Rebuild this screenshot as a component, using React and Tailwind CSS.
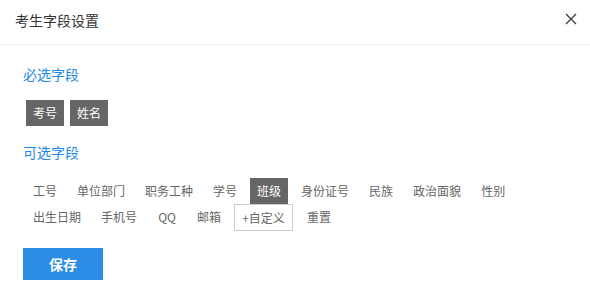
import React from "react";

const optional = ["工号", "单位部门", "职务工种", "学号", "班级", "身份证号", "民族", "政治面貌", "性别", "出生日期", "手机号", "QQ", "邮箱"];

export default function App() {
  return (
    <div
      className="w-[590px] h-[296px] bg-white relative"
      style={{ fontFamily: '"Noto Sans CJK SC", "Noto Sans", sans-serif' }}
    >
      <div className="h-[45px] border-b border-[#eeeeee] flex items-center justify-between pl-[15px] pr-[13px]">
        <span className="text-[14px] text-[#333333] leading-[20px] -mt-[4px]">考生字段设置</span>
        <svg width="12" height="12" viewBox="0 0 12 12" className="-mt-[7px]">
          <path d="M1 1 L11 11 M11 1 L1 11" stroke="#3a3a44" strokeWidth="1.3" fill="none" />
        </svg>
      </div>
      <div className="px-[23px]">
        <div className="mt-[19px] text-[14px] leading-[20px] text-[#1e88e5]">必选字段</div>
        <div className="mt-[16px] pl-[3px] flex gap-[6px]">
          <span className="h-[26px] px-[7px] flex items-center bg-[#666666] text-white text-[12px]">考号</span>
          <span className="h-[26px] px-[7px] flex items-center bg-[#666666] text-white text-[12px]">姓名</span>
        </div>
        <div className="mt-[16px] text-[14px] leading-[20px] text-[#1e88e5]">可选字段</div>
        <div className="mt-[16px] pl-[3px] w-[540px] flex flex-wrap">
          {optional.map((t) => (
            <span
              key={t}
              className={
                t === "班级"
                  ? "h-[26px] px-[7px] mr-[6px] flex items-center bg-[#666666] text-white text-[12px]"
                  : t === "QQ"
                  ? "h-[26px] w-[34px] mr-[6px] flex items-center justify-center text-[#666666] text-[12px]"
                  : "h-[26px] px-[7px] mr-[6px] flex items-center text-[#666666] text-[12px]"
              }
            >
              {t}
            </span>
          ))}
          <span className="h-[27px] w-[59px] mr-[7px] flex items-center justify-center border border-[#cccccc] text-[#666666] text-[12px]">+自定义</span>
          <span className="h-[26px] px-[7px] mr-[6px] flex items-center text-[#666666] text-[12px]">重置</span>
        </div>
        <button className="mt-[17px] w-[80px] h-[32px] bg-[#2b8de6] text-white text-[14px] font-bold flex items-center justify-center">
          保存
        </button>
      </div>
    </div>
  );
}
